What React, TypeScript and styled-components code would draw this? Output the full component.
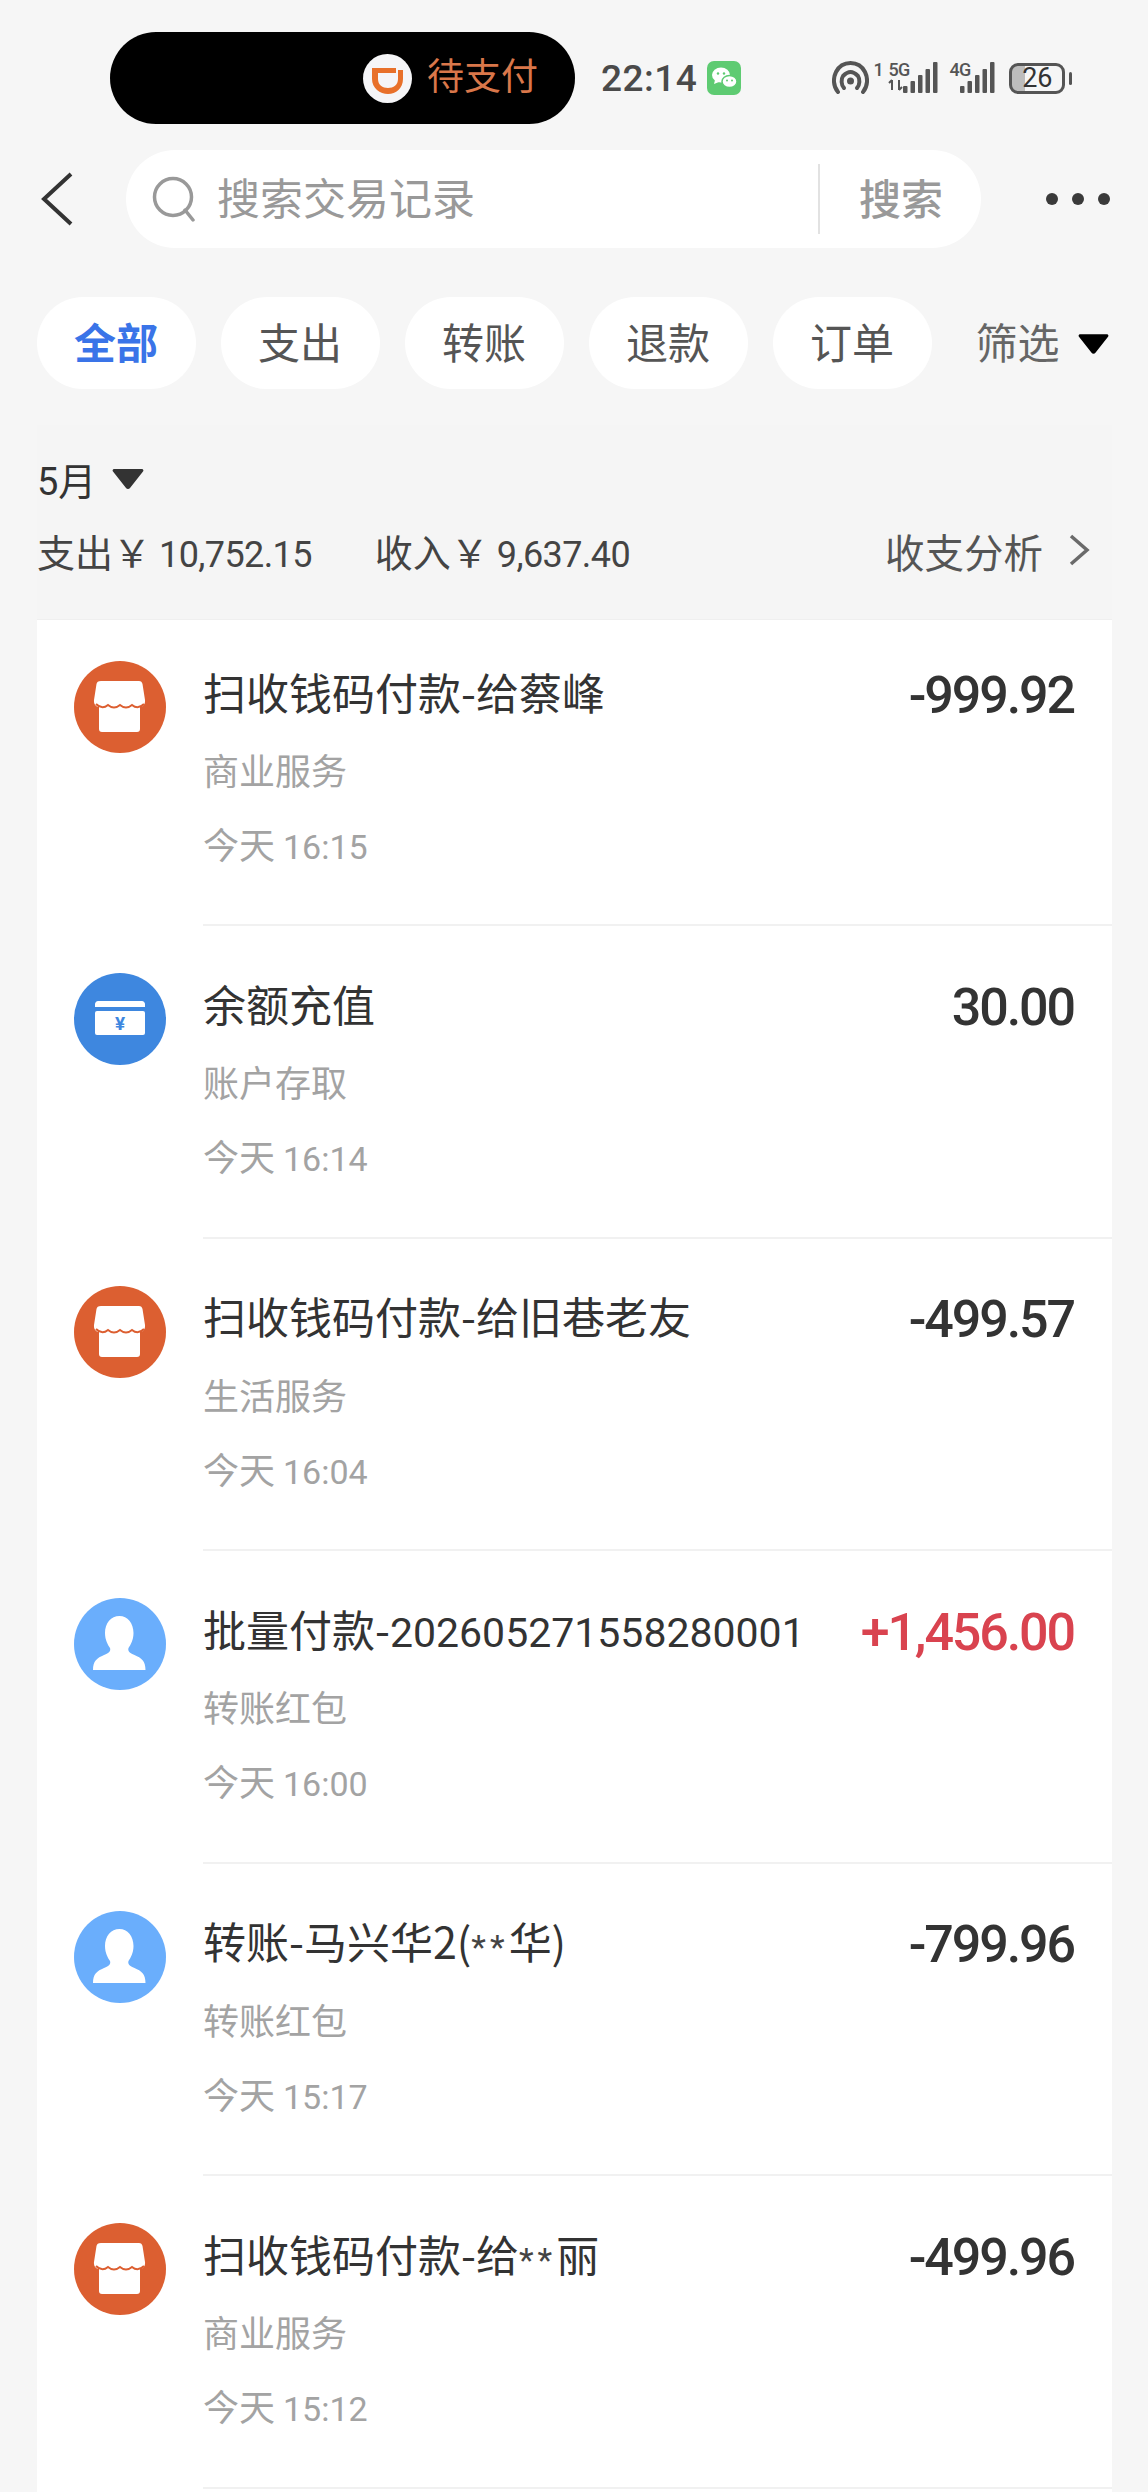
import React, { FC } from "react";
import styled, { createGlobalStyle } from "styled-components";

const GlobalStyle = createGlobalStyle`
  html, body {
    margin: 0;
    padding: 0;
    background: #f6f6f6;
  }
  body {
    font-family: Roboto, "Noto Sans CJK SC", sans-serif;
    color: #333;
  }
  * { box-sizing: border-box; }
`;

const Page = styled.div`
  width: 1148px;
  height: 2492px;
  overflow: hidden;
  background: #f6f6f6;
`;

/* status bar */
const StatusBar = styled.div`
  display: flex;
  align-items: center;
  height: 92px;
  margin-top: 32px;
  padding-left: 110px;
`;
const Island = styled.div`
  display: flex;
  align-items: center;
  justify-content: flex-end;
  width: 465px;
  height: 92px;
  padding-right: 37px;
  gap: 15px;
  background: #000;
  border-radius: 46px;
`;
const IslandText = styled.span`
  font-size: 37px;
  line-height: 44px;
  color: #d9774a;
`;
const Clock = styled.span`
  margin-left: 26px;
  font-size: 37px;
  font-weight: 500;
  color: #4a4a4a;
  letter-spacing: 0.5px;
`;
const WechatBadge = styled.svg`
  margin-left: 10px;
`;
const SignalGroup = styled.div`
  display: flex;
  align-items: flex-start;
  height: 34px;
  margin-left: 91px;
`;
const NetLabel = styled.span`
  display: block;
  font-size: 18px;
  line-height: 18px;
  font-weight: 500;
  letter-spacing: -0.5px;
  color: #555;
`;
const SimIndex = styled(NetLabel)`
  margin-left: 4px;
  width: 15px;
`;
const NetColumn = styled.div<{ $before?: number; $after: number }>`
  display: flex;
  flex-direction: column;
  width: 22px;
  margin-left: ${(p) => p.$before ?? 0}px;
  margin-right: ${(p) => p.$after}px;
`;
const Bars = styled.svg``;
const Battery = styled.div`
  position: relative;
  display: flex;
  align-items: center;
  justify-content: center;
  width: 56px;
  height: 31px;
  margin-left: 13px;
  border: 3px solid #555;
  border-radius: 9px;
  font-size: 27px;
  color: #333;
  background: linear-gradient(90deg, #bdbdbd 0 26%, transparent 26%);
  &::after {
    content: "";
    position: absolute;
    right: -10px;
    top: 6px;
    width: 3px;
    height: 13px;
    border-radius: 2px;
    background: #555;
  }
`;

/* search */
const SearchRow = styled.div`
  display: flex;
  align-items: center;
  height: 98px;
  margin-top: 26px;
  padding-left: 40px;
`;
const SearchBox = styled.div`
  display: flex;
  align-items: center;
  width: 855px;
  height: 98px;
  margin-left: 52px;
  padding-left: 26px;
  background: #fff;
  border-radius: 49px;
`;
const Placeholder = styled.span`
  flex: 1;
  margin-left: 19px;
  padding-bottom: 6px;
  font-size: 43px;
  color: #999;
`;
const SearchDivider = styled.div`
  width: 2px;
  height: 70px;
  background: #e2e2e2;
`;
const SearchButton = styled.span`
  width: 161px;
  padding: 0 0 6px 39px;
  font-size: 42px;
  font-weight: 500;
  color: #999;
`;
const Dots = styled.div`
  display: flex;
  gap: 14px;
  margin-left: 65px;
`;
const Dot = styled.i`
  width: 12px;
  height: 12px;
  border-radius: 50%;
  background: #3a3a3a;
`;

/* filter chips */
const FilterRow = styled.div`
  display: flex;
  align-items: center;
  gap: 25px;
  margin-top: 49px;
  padding-left: 36.5px;
`;
const Chip = styled.div<{ $active?: boolean }>`
  display: flex;
  align-items: center;
  justify-content: center;
  width: 159px;
  height: 92px;
  padding-bottom: 5px;
  background: #fff;
  border-radius: 46px;
  font-size: 42px;
  font-weight: ${(p) => (p.$active ? 700 : 400)};
  color: ${(p) => (p.$active ? "#3a74e8" : "#555")};
`;
const FilterLink = styled.div`
  display: flex;
  align-items: center;
  gap: 18px;
  margin-left: 19px;
  font-size: 42px;
  color: #666;
`;
const FilterLabel = styled.span`
  padding-bottom: 5px;
`;

/* summary + list */
const Section = styled.div`
  width: 1075px;
  margin: 36px 0 0 37px;
  background: #f5f5f5;
`;
const Summary = styled.div`
  height: 194px;
  padding-top: 30px;
`;
const MonthRow = styled.div`
  display: flex;
  align-items: center;
  gap: 16px;
  height: 46px;
  font-size: 38px;
  color: #333;
`;
const TotalsRow = styled.div`
  display: flex;
  align-items: center;
  height: 46px;
  margin-top: 26px;
  font-size: 38px;
  color: #444;
`;
const Total = styled.span`
  margin-right: 63px;
`;
const TotalNum = styled.span`
  font-size: 36px;
  letter-spacing: -0.6px;
  margin-left: 8px;
`;
const Analysis = styled.div`
  display: flex;
  align-items: center;
  gap: 25px;
  margin-left: auto;
  padding-right: 22px;
  font-size: 39.5px;
  color: #555;
`;
const List = styled.div`
  background: #fff;
  height: 1880px;
  border-top: 1px solid #efefef;
`;
const Row = styled.div<{ $first?: boolean }>`
  display: flex;
  height: ${(p) => (p.$first ? "306px" : "312.6px")};
  padding-left: 37px;
`;
const Avatar = styled.svg<{ $first?: boolean }>`
  flex: none;
  margin-top: ${(p) => (p.$first ? "41px" : "47px")};
`;
const Body = styled.div<{ $first?: boolean }>`
  flex: 1;
  margin-left: 37px;
  padding: ${(p) => (p.$first ? "47px" : "53px")} 38px 0 0;
  border-bottom: 2px solid #f1f1f1;
`;
const TitleLine = styled.div`
  display: flex;
  justify-content: space-between;
  align-items: center;
  height: 50px;
`;
const Title = styled.span`
  padding-bottom: 3px;
  font-family: "Noto Sans CJK SC", sans-serif;
  font-size: 43px;
  color: #333;
  white-space: nowrap;
`;
const Code = styled.span`
  font-family: Roboto, sans-serif;
  font-size: 41px;
`;
const Stars = styled.span`
  font-family: Roboto, sans-serif;
  font-size: 34px;
  letter-spacing: 4px;
  color: #444;
`;
const Amount = styled.span<{ $income?: boolean }>`
  padding-top: 6px;
  font-size: 52px;
  font-weight: 500;
  letter-spacing: -2.1px;
  color: ${(p) => (p.$income ? "#d9434f" : "#333")};
  white-space: nowrap;
`;
const Category = styled.div`
  height: 44px;
  margin-top: 34px;
  font-size: 36px;
  line-height: 44px;
  color: #a3a3a3;
`;
const Time = styled.div`
  height: 44px;
  margin-top: 30px;
  font-size: 36px;
  line-height: 44px;
  color: #a3a3a3;
`;
const TimeNum = styled.span`
  font-size: 34px;
  margin-left: 8px;
`;

/* drawings */
const CardYen = styled.text`
  font-family: Roboto, sans-serif;
  font-weight: 700;
  fill: #3e87df;
`;

const DidiLogo: FC = () => (
  <svg width="49" height="49" viewBox="0 0 49 49">
    <circle cx="24.5" cy="24.5" r="24.5" fill="#f5f5f7" />
    <path
      d="M9 14h24v5H15v6c0 6 4.500 9 10 9s10-3 10-9v-9h5v9c0 9-7 15-15 15S9 34 9 25z"
      fill="#e8702a"
    />
  </svg>
);

const Wechat: FC = () => (
  <WechatBadge width="34" height="34" viewBox="0 0 34 34">
    <rect width="34" height="34" rx="7" fill="#5ecb72" />
    <ellipse cx="14" cy="14" rx="9" ry="7.500" fill="#fff" />
    <path d="M8 19l-1 4 5-2z" fill="#fff" />
    <ellipse cx="22.500" cy="20.500" rx="7.500" ry="6" fill="#fff" stroke="#5ecb72" strokeWidth="1.500" />
    <circle cx="11" cy="12.500" r="1.200" fill="#5ecb72" />
    <circle cx="17" cy="12.500" r="1.200" fill="#5ecb72" />
    <circle cx="20" cy="19.500" r="1" fill="#5ecb72" />
    <circle cx="25" cy="19.500" r="1" fill="#5ecb72" />
  </WechatBadge>
);

const Hotspot: FC = () => (
  <svg width="37" height="33" viewBox="0 0 37 33">
    <g fill="none" stroke="#555" strokeWidth="4" strokeLinecap="round">
      <path d="M6 31C1 25 1 17 4 11 7 5 12 2 18.500 2S30 5 33 11c3 6 3 14-2 20" />
      <path d="M12 27c-3-3-3-9-1-12 2-2 5-4 7.500-4s5.500 2 7.500 4c2 3 2 9-1 12" />
    </g>
    <circle cx="18.500" cy="20" r="3.500" fill="#555" />
  </svg>
);

const barHeights = [7, 12, 18, 24, 31];
const SignalBars: FC = () => (
  <Bars width="36" height="32" viewBox="0 0 36 32">
    {barHeights.map((h, i) => (
      <rect key={i} x={i * 7.5} y={32 - h} width="4.500" height={h} rx="1" fill="#555" />
    ))}
  </Bars>
);

const TransferArrows: FC = () => (
  <svg width="16" height="12" viewBox="0 0 16 12">
    <path d="M4 1v10M1 4l3-3M11 1v10M11 11l3-3" stroke="#555" strokeWidth="2" fill="none" />
  </svg>
);

const BackIcon: FC = () => (
  <svg width="34" height="54" viewBox="0 0 34 54">
    <path d="M31 2L4 27l27 25" fill="none" stroke="#333" strokeWidth="4" />
  </svg>
);

const SearchIcon: FC = () => (
  <svg width="46" height="46" viewBox="0 0 46 46">
    <circle cx="21" cy="21" r="18.500" fill="none" stroke="#999" strokeWidth="3.500" />
    <path d="M33 34l8 10" stroke="#999" strokeWidth="3.500" strokeLinecap="round" />
  </svg>
);

const Triangle: FC<{ w: number; h: number; color: string }> = ({ w, h, color }) => (
  <svg width={w} height={h} viewBox="0 0 32 21">
    <path d="M2 1h28a1.500 1.500 0 0 1 1 2.500L18 20a2.500 2.500 0 0 1-4 0L1 3.500A1.500 1.500 0 0 1 2 1z" fill={color} />
  </svg>
);

const ChevronRight: FC = () => (
  <svg width="22" height="32" viewBox="0 0 22 32">
    <path d="M3 2l16 14L3 30" fill="none" stroke="#6a6a6a" strokeWidth="3.500" />
  </svg>
);

type IconKind = "shop" | "card" | "person";

const iconColors: Record<IconKind, string> = {
  shop: "#dc5f31",
  card: "#3e87df",
  person: "#6aaefc",
};

const RowIcon: FC<{ kind: IconKind; first?: boolean }> = ({ kind, first }) => (
  <Avatar $first={first} width="92" height="92" viewBox="0 0 92 92">
    <circle cx="46" cy="46" r="46" fill={iconColors[kind]} />
    {kind === "shop" && (
      <>
        <path
          d="M27 20h38c2 0 3 1 3.500 3l2.500 16c.5 4-2 7-5 7v22c0 2-1 3-3 3H28c-2 0-3-1-3-3V46c-3 0-5.500-3-5-7l2.500-16c.5-2 1.500-3 4.500-3z"
          fill="#fff"
        />
        <path
          d="M22 43q6 6 12 1q6 5 12 0q6 5 12 0q6 5 12-1"
          fill="none"
          stroke="#dc5f31"
          strokeWidth="2"
        />
      </>
    )}
    {kind === "card" && (
      <>
        <path d="M24 28h44c1.500 0 3 1.500 3 3v3H21v-3c0-1.500 1.500-3 3-3z" fill="#fff" />
        <rect x="21" y="38" width="50" height="24" rx="2" fill="#fff" />
        <CardYen x="46" y="57" fontSize="19" textAnchor="middle">¥</CardYen>
      </>
    )}
    {kind === "person" && (
      <path
        d="M45.500 18c8 0 14 7 14 17 0 7-3 12-5 15-1 3 1 5 6 7 7 3 11 6 11 15H19c0-9 4-12 11-15 5-2 7-4 6-7-2-3-5-8-5-15 0-10 6-17 14.500-17z"
        fill="#fff"
      />
    )}
  </Avatar>
);

interface ITransaction {
  icon: IconKind;
  title: React.ReactNode;
  amount: string;
  category: string;
  time: string;
  income?: boolean;
}

const transactions: ITransaction[] = [
  { icon: "shop", title: "扫收钱码付款-给蔡峰", amount: "-999.92", category: "商业服务", time: "16:15" },
  { icon: "card", title: "余额充值", amount: "30.00", category: "账户存取", time: "16:14" },
  { icon: "shop", title: "扫收钱码付款-给旧巷老友", amount: "-499.57", category: "生活服务", time: "16:04" },
  {
    icon: "person",
    title: (
      <>
        批量付款-<Code>202605271558280001</Code>
      </>
    ),
    amount: "+1,456.00",
    category: "转账红包",
    time: "16:00",
    income: true,
  },
  {
    icon: "person",
    title: (
      <>
        转账-马兴华2(<Stars>**</Stars>华)
      </>
    ),
    amount: "-799.96",
    category: "转账红包",
    time: "15:17",
  },
  {
    icon: "shop",
    title: (
      <>
        扫收钱码付款-给<Stars>**</Stars>丽
      </>
    ),
    amount: "-499.96",
    category: "商业服务",
    time: "15:12",
  },
];

const chips = ["全部", "支出", "转账", "退款", "订单"];

const App: FC = () => {
  return (
    <Page>
      <GlobalStyle />
      <StatusBar>
        <Island>
          <DidiLogo />
          <IslandText>待支付</IslandText>
        </Island>
        <Clock>22:14</Clock>
        <Wechat />
        <SignalGroup>
          <Hotspot />
          <SimIndex>1</SimIndex>
          <NetColumn $after={-7}>
            <NetLabel>5G</NetLabel>
            <TransferArrows />
          </NetColumn>
          <SignalBars />
          <NetColumn $before={10} $after={-11}>
            <NetLabel>4G</NetLabel>
          </NetColumn>
          <SignalBars />
        </SignalGroup>
        <Battery>26</Battery>
      </StatusBar>

      <SearchRow>
        <BackIcon />
        <SearchBox>
          <SearchIcon />
          <Placeholder>搜索交易记录</Placeholder>
          <SearchDivider />
          <SearchButton>搜索</SearchButton>
        </SearchBox>
        <Dots>
          <Dot />
          <Dot />
          <Dot />
        </Dots>
      </SearchRow>

      <FilterRow>
        {chips.map((chip, index) => (
          <Chip key={chip} $active={index === 0}>
            {chip}
          </Chip>
        ))}
        <FilterLink>
          <FilterLabel>筛选</FilterLabel>
          <Triangle w={31} h={21} color="#000" />
        </FilterLink>
      </FilterRow>

      <Section>
        <Summary>
          <MonthRow>
            5月
            <Triangle w={32} h={21} color="#333" />
          </MonthRow>
          <TotalsRow>
            <Total>
              支出￥<TotalNum>10,752.15</TotalNum>
            </Total>
            <Total>
              收入￥<TotalNum>9,637.40</TotalNum>
            </Total>
            <Analysis>
              收支分析
              <ChevronRight />
            </Analysis>
          </TotalsRow>
        </Summary>
        <List>
          {transactions.map((item, index) => (
            <Row key={index} $first={index === 0}>
              <RowIcon kind={item.icon} first={index === 0} />
              <Body $first={index === 0}>
                <TitleLine>
                  <Title>{item.title}</Title>
                  <Amount $income={item.income}>{item.amount}</Amount>
                </TitleLine>
                <Category>{item.category}</Category>
                <Time>
                  今天<TimeNum>{item.time}</TimeNum>
                </Time>
              </Body>
            </Row>
          ))}
        </List>
      </Section>
    </Page>
  );
};

export default App;
